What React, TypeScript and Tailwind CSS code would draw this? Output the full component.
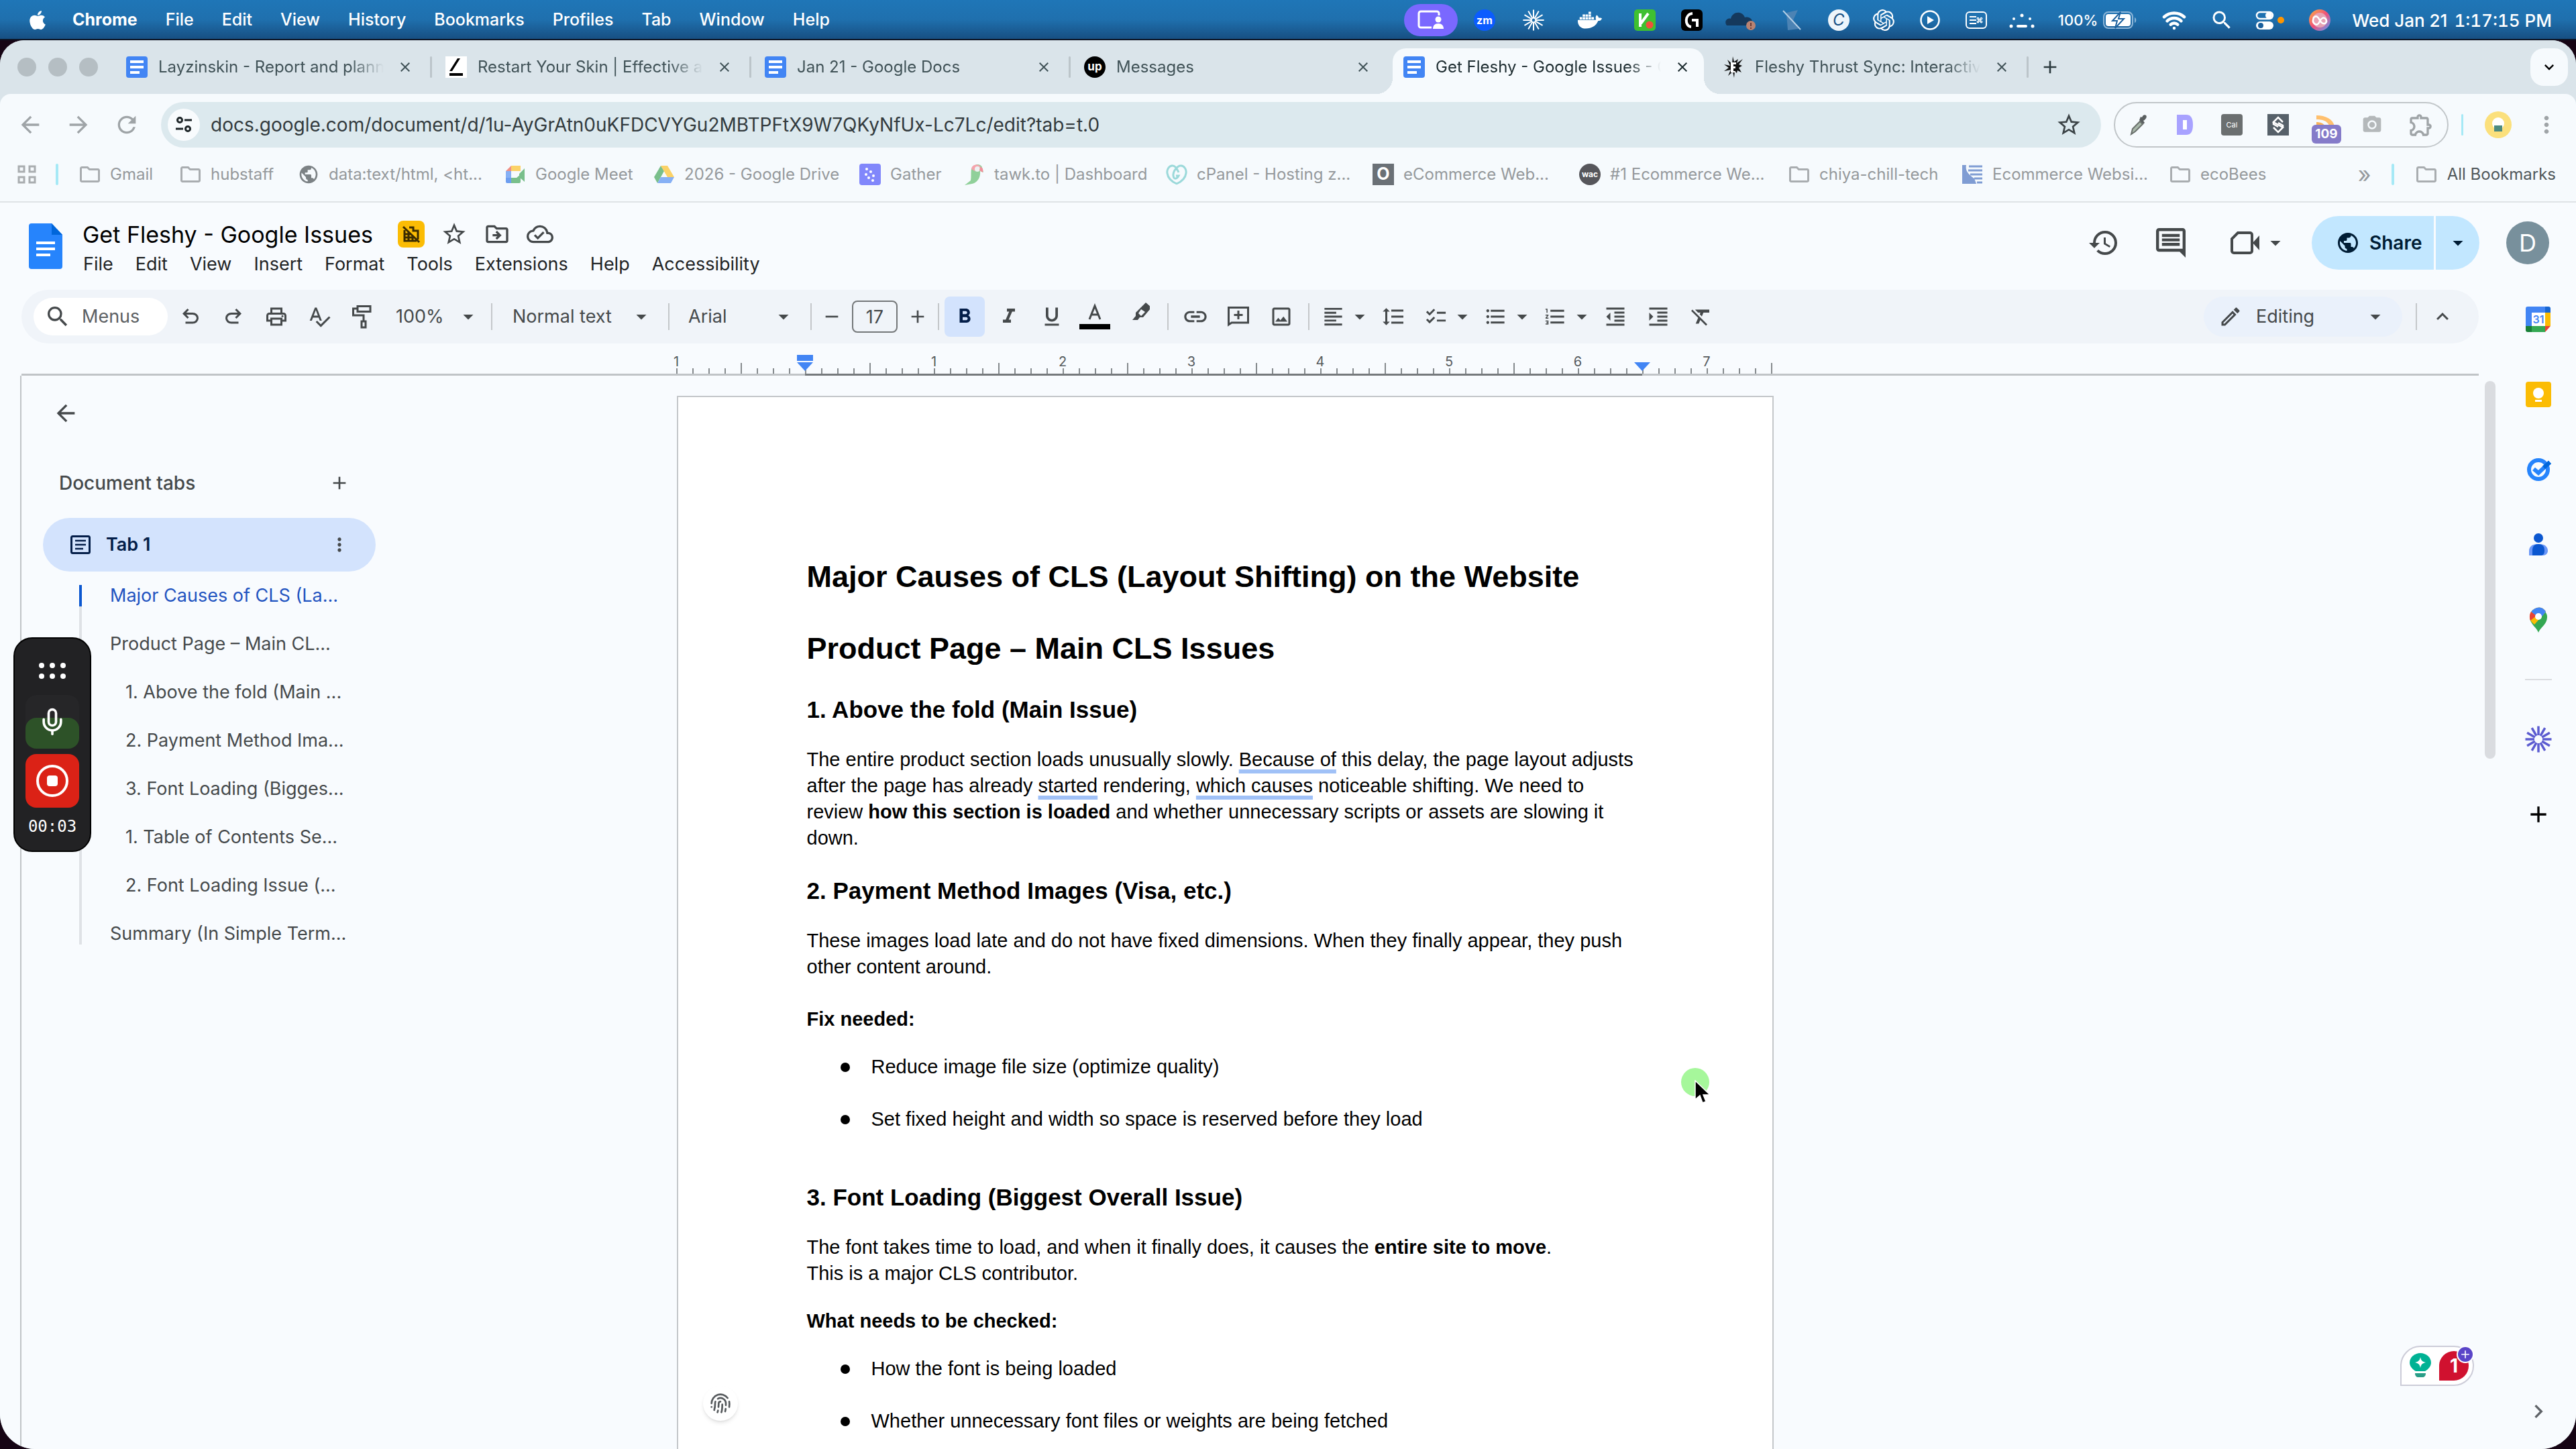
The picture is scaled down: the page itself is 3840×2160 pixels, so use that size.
import type { ReactNode } from "react";
import {
  MdAdd,
  MdArrowBack,
  MdArrowDropDown,
  MdArrowForward,
  MdChecklist,
  MdClose,
  MdFormatAlignLeft,
  MdFormatBold,
  MdFormatClear,
  MdFormatIndentDecrease,
  MdFormatIndentIncrease,
  MdFormatItalic,
  MdFormatLineSpacing,
  MdFormatListBulleted,
  MdFormatListNumbered,
  MdFormatUnderlined,
  MdHistory,
  MdKeyboardArrowDown,
  MdKeyboardArrowUp,
  MdKeyboardArrowRight,
  MdLink,
  MdMoreVert,
  MdOutlineCloudDone,
  MdOutlineDriveFileMove,
  MdOutlineEdit,
  MdOutlineExtension,
  MdOutlineFolder,
  MdOutlineImage,
  MdOutlinePrint,
  MdPhotoCamera,
  MdPublic,
  MdRefresh,
  MdRemove,
  MdSearch,
  MdSpellcheck,
  MdStarBorder,
} from "react-icons/md";
import { FaApple, FaDocker } from "react-icons/fa";
import { SiOpenai } from "react-icons/si";
import { Command, Fingerprint, Mic, Wifi } from "lucide-react";

const Burst = ({ className, rays, inner, width }: { className: string; rays: number; inner: number; width: number }) => (
  <svg viewBox="0 0 40 40" className={className} stroke="currentColor" strokeWidth={width}>
    {Array.from({ length: rays }, (_, i) => (
      <line key={i} x1="20" y1={20 - inner} x2="20" y2="0.5" transform={`rotate(${(360 / rays) * i} 20 20)`} />
    ))}
  </svg>
);

const DocsFavicon = () => (
  <svg viewBox="0 0 32 32" className="size-8 shrink-0">
    <rect width="32" height="32" rx="4" fill="#4285f4" />
    <path d="M6 6h20v4H6zM6 14h20v4H6zM6 22h14v4H6z" fill="#fff" />
  </svg>
);

const SlashFavicon = () => (
  <svg viewBox="0 0 32 32" className="size-8 shrink-0">
    <rect width="32" height="32" fill="#fff" />
    <path d="M18 3h4L10 22H6zM6 25h20v4H6z" fill="#000" />
  </svg>
);

const UpFavicon = () => (
  <span className="flex size-8 shrink-0 items-center justify-center rounded-full bg-black text-[17px] font-bold text-white">
    up
  </span>
);

const InkFavicon = () => (
  <svg viewBox="0 0 32 32" className="size-8 shrink-0" fill="#111">
    <path d="M15 0l2 8 6-4-2 6 9-6-6 8 5 2-5 3 4 7-6-3-1 4-3-3-1 10-2-9-7 6 4-9-10 2 7-5-7-5 9 2-4-9 7 6z" />
    <path d="M12 9h8v3h-4v3h3v3h-3v4h3v2h-7z" fill="#fff" />
  </svg>
);

const browserTabs = [
  { title: "Layzinskin - Report and planning", icon: <DocsFavicon /> },
  { title: "Restart Your Skin | Effective and", icon: <SlashFavicon /> },
  { title: "Jan 21 - Google Docs", icon: <DocsFavicon /> },
  { title: "Messages", icon: <UpFavicon /> },
  { title: "Get Fleshy - Google Issues - Google", icon: <DocsFavicon />, active: true },
  { title: "Fleshy Thrust Sync: Interactive", icon: <InkFavicon /> },
];

const MenuBar = () => (
  <header className="flex h-15 shrink-0 items-center justify-between border-b-2 border-[#0c1424] bg-linear-to-b from-[#1f76b7] via-[#1f70ae] to-[#174f82] pt-[2px] pr-9 pl-10 text-[26px] text-white">
    <nav className="flex items-center gap-[42px] text-[25px] font-medium">
      <FaApple className="-mr-[6px] size-8" />
      <button className="font-bold">Chrome</button>
      {["File", "Edit", "View", "History", "Bookmarks", "Profiles", "Tab", "Window", "Help"].map((item) => (
        <button key={item}>{item}</button>
      ))}
    </nav>
    <div className="flex items-center">
      <span className="mr-6 flex h-12 w-20 items-center justify-center rounded-full bg-[#7a68ff]">
        <svg viewBox="0 0 40 30" className="h-[30px] w-10" fill="none" stroke="#fff" strokeWidth="3">
          <path d="M32 8V5a3 3 0 0 0-3-3H5a3 3 0 0 0-3 3v18a3 3 0 0 0 3 3h16" />
          <circle cx="31" cy="14" r="4.500" fill="#fff" stroke="none" />
          <path d="M23 28c0-5 3-8 8-8s8 3 8 8z" fill="#fff" stroke="none" />
        </svg>
      </span>
      <span className="mr-[41px] flex size-8 items-center justify-center rounded-full bg-[#0b5cff] text-[16px] font-bold">zm</span>
      <Burst className="mr-[50px] size-8" rays={12} inner={3} width={2.5} />
      <FaDocker className="mr-[48px] size-9" />
      <svg viewBox="0 0 32 32" className="mr-[38px] size-8">
        <rect width="32" height="32" rx="5" fill="#3fc030" />
        <path d="M9 6v20M21 6L10 21" stroke="#fff" strokeWidth="4" fill="none" />
        <circle cx="23" cy="23" r="5.500" fill="#f0503c" />
      </svg>
      <svg viewBox="0 0 32 32" className="mr-[32px] size-8" fill="none" stroke="#fff" strokeWidth="4">
        <rect width="32" height="32" rx="6" fill="#000" stroke="none" />
        <path d="M17 6C5 7 5 25 15 26M16 16h8v10" />
      </svg>
      <svg viewBox="0 0 48 32" className="mr-[37px] h-8 w-12">
        <path d="M4 24c-5-7 2-12 6-10C12 3 27 1 31 12c8-2 13 4 11 12z" fill="#15395c" />
        <circle cx="40" cy="24" r="7" fill="#b98372" />
        <path d="M40 20v5M40 27v2" stroke="#6d3c35" strokeWidth="2" />
      </svg>
      <svg viewBox="0 0 32 32" className="mr-[38px] size-8">
        <path d="M8 5l17-4-7 15 8 13-16 2z" fill="#4c83b4" />
        <path d="M3 2l26 28" stroke="#b4cfe6" strokeWidth="2" />
      </svg>
      <span className="mr-[35px] flex size-8 items-center justify-center rounded-full bg-[#eef5fb] text-[24px] italic text-[#174f82]">C</span>
      <SiOpenai className="mr-[37px] size-8" />
      <svg viewBox="0 0 32 32" className="mr-[37px] size-8" fill="none" stroke="#fff" strokeWidth="2.500">
        <circle cx="16" cy="16" r="13.500" />
        <path d="M12 10l10 6-10 6z" fill="#fff" stroke="none" />
      </svg>
      <span className="mr-8 flex h-[26px] w-8 items-center justify-between rounded-md border-2 border-white px-1">
        <svg viewBox="0 0 10 14" className="h-[14px] w-[10px]" stroke="#fff" strokeWidth="2">
          <path d="M0 2h10M0 7h10M0 12h10" />
        </svg>
        <Command className="size-[10px]" strokeWidth={3} />
      </span>
      <svg viewBox="0 0 40 32" className="mr-[34px] h-8 w-10" fill="#fff">
        <circle cx="20" cy="9" r="2.500" />
        <circle cx="8" cy="14" r="2" />
        <circle cx="32" cy="14" r="2" />
        <circle cx="4" cy="25" r="2.500" />
        <circle cx="36" cy="25" r="2.500" />
        <rect x="12" y="23" width="16" height="4" rx="2" />
      </svg>
      <span className="mr-2 text-[22px] font-medium">100%</span>
      <svg viewBox="0 0 50 26" className="mr-[38px] h-[26px] w-[50px]">
        <rect x="1" y="1" width="43" height="24" rx="7" fill="none" stroke="#8db6d8" strokeWidth="2" />
        <rect x="4" y="4" width="37" height="18" rx="4" fill="#fff" />
        <path d="M47 9c3 1 3 7 0 8z" fill="#8db6d8" />
        <path d="M26 1L14 14h7l-3 11 13-14h-8z" fill="#fff" stroke="#1d629f" strokeWidth="2" />
      </svg>
      <Wifi className="mr-[35px] size-9" strokeWidth={3} />
      <MdSearch className="mr-8 size-9" />
      <svg viewBox="0 0 44 32" className="mr-9 h-8 w-11">
        <rect x="2" y="4" width="24" height="10" rx="5" fill="none" stroke="#fff" strokeWidth="2.500" />
        <circle cx="20" cy="9" r="5" fill="#fff" />
        <rect x="1" y="18" width="26" height="12" rx="6" fill="#fff" />
        <circle cx="8" cy="24" r="4" fill="#1a5f9c" />
        <circle cx="38" cy="16" r="5" fill="#ff9500" />
      </svg>
      <svg viewBox="0 0 32 32" className="mr-8 size-8" fill="none">
        <defs>
          <linearGradient id="siri" x1="0" y1="0" x2="1" y2="1">
            <stop offset="0" stopColor="#ffb340" />
            <stop offset="0.500" stopColor="#f0507a" />
            <stop offset="1" stopColor="#5aa0ff" />
          </linearGradient>
        </defs>
        <circle cx="16" cy="16" r="16" fill="url(#siri)" />
        <circle cx="16" cy="16" r="11" fill="#e8a3b4" />
        <path d="M7 12c4-4 7 0 9 4s6 7 9 4-1-9-5-7-4 7-7 9-8-2-7-6z" stroke="#fff" strokeWidth="2.500" />
      </svg>
      <span className="flex gap-[10px] font-medium">
        <span>Wed Jan 21</span>
        <span className="tabular-nums">1:17:15 PM</span>
      </span>
    </div>
  </header>
);

const TabStrip = () => (
  <div className="flex h-20 shrink-0 items-center bg-[#dae4ea] pr-3 pl-[26px]">
    <div className="mr-[26px] flex gap-[18px]">
      <span className="size-7 rounded-full bg-[#b5bec3]" />
      <span className="size-7 rounded-full bg-[#b5bec3]" />
      <span className="size-7 rounded-full bg-[#b5bec3]" />
    </div>
    <div className="flex h-full flex-1 pt-3">
      {browserTabs.map((tab, i) => (
        <div key={tab.title} className="flex">
          <div
            className={
              tab.active
                ? "relative flex w-[464px] items-center rounded-t-[20px] bg-[#f6fafd] px-4 pb-3 text-[#1c2b2f]"
                : "relative flex w-[464px] items-center px-4 pb-3 text-[#405257]"
            }
          >
            {tab.active && (
              <>
                <span className="absolute bottom-0 -left-6 size-6 bg-[radial-gradient(circle_at_0_0,transparent_24px,#f6fafd_24px)]" />
                <span className="absolute -right-6 bottom-0 size-6 bg-[radial-gradient(circle_at_100%_0,transparent_24px,#f6fafd_24px)]" />
              </>
            )}
            {tab.icon}
            <span className="ml-4 flex-1 overflow-hidden mask-r-from-85% text-[24px] whitespace-nowrap">{tab.title}</span>
            <button aria-label="Close tab" className="ml-4 flex size-8 items-center justify-center">
              <MdClose className="size-6" />
            </button>
          </div>
          <div className="flex w-3 items-center justify-center pb-3">
            {i !== 3 && i !== 4 && <span className="h-8 w-[3px] rounded-full bg-[#bcc5ca]" />}
          </div>
        </div>
      ))}
      <button aria-label="New tab" className="ml-3 pb-3 text-[#2d3b40]">
        <MdAdd className="size-8" />
      </button>
    </div>
    <button aria-label="Search tabs" className="flex size-14 items-center justify-center rounded-[20px] bg-[#f6fafd] text-black">
      <MdKeyboardArrowDown className="size-7" />
    </button>
  </div>
);

const AddressBar = () => (
  <div className="flex h-[92px] shrink-0 items-center pr-6 pl-[25px]">
    <div className="flex w-[215px] items-center gap-8 text-[#9fa4a7]">
      <button aria-label="Back">
        <MdArrowBack className="size-10" />
      </button>
      <button aria-label="Forward">
        <MdArrowForward className="size-10" />
      </button>
      <button aria-label="Reload">
        <MdRefresh className="size-10" />
      </button>
    </div>
    <div className="flex h-17 flex-1 items-center rounded-full bg-[#dce9ee] pr-7 pl-[10px]">
      <span className="flex size-12 items-center justify-center rounded-full bg-[#f8fbfd]">
        <svg viewBox="0 0 28 28" className="size-7" fill="none" stroke="#1d2528" strokeWidth="3">
          <circle cx="8" cy="7" r="3.500" />
          <path d="M15 7h11M2 20h11" />
          <circle cx="20" cy="20" r="3.500" />
        </svg>
      </span>
      <input
        aria-label="Address"
        className="ml-4 flex-1 text-[28px] text-[#333b3e] outline-none"
        defaultValue="docs.google.com/document/d/1u-AyGrAtn0uKFDCVYGu2MBTPFtX9W7QKyNfUx-Lc7Lc/edit?tab=t.0"
      />
      <button aria-label="Bookmark this tab">
        <MdStarBorder className="size-10 text-[#3c4447]" />
      </button>
    </div>
    <div className="mx-[19px] flex h-17 w-[499px] items-center justify-around rounded-full border-2 border-[#c1c6c9]">
      <svg viewBox="0 0 32 32" className="size-8">
        <path d="M5 30l2-8L18 11l4 4L11 26z" fill="#a9b8aa" stroke="#6a706c" strokeWidth="2" />
        <path d="M17 9l6 6 2-2-2-3c4-2 6-6 4-8s-5 0-6 3l-2-1z" fill="#5a5f60" />
      </svg>
      <svg viewBox="0 0 32 32" className="size-8">
        <path d="M4 1h14c6 0 10 4 10 15s-4 15-10 15H4z" fill="#a8a2ff" />
        <rect x="13" y="9" width="6" height="14" fill="#fff" />
      </svg>
      <span className="flex size-8 items-center justify-center rounded-sm bg-[#6b6f70] text-[11px] text-white">Cal</span>
      <svg viewBox="0 0 32 32" className="size-8">
        <rect width="32" height="32" fill="#566069" />
        <path d="M23 12l-7-7-7 7 14 8-7 7-7-7M9 12v3l7 4M23 20v-3l-7-4" stroke="#fff" strokeWidth="2.500" fill="none" />
      </svg>
      <span className="relative size-8">
        <svg viewBox="0 0 32 32" className="size-8">
          <path d="M3 2c14 0 25 6 27 16L22 17C19 10 12 8 3 8z" fill="#ffc06e" />
          <path d="M3 12c6 0 11 2 13 6H3z" fill="#f7b25a" />
        </svg>
        <span className="absolute top-4 -left-1 flex h-7 w-11 items-center justify-center rounded-md bg-[#857bc9] text-[19px] font-bold text-white">
          109
        </span>
      </span>
      <MdPhotoCamera className="size-8 text-[#b4b8ba]" />
      <MdOutlineExtension className="size-10 text-[#9fa4a7]" />
    </div>
    <span className="h-8 w-[3px] rounded-full bg-[#a6e9f6]" />
    <span className="mx-8 flex size-10 items-center justify-center rounded-full bg-[#fbe07c]">
      <svg viewBox="0 0 24 24" className="size-6">
        <circle cx="12" cy="10" r="9" fill="#fff" />
        <rect x="6" y="13" width="12" height="9" fill="#4c8a80" />
      </svg>
    </span>
    <button aria-label="Chrome menu">
      <MdMoreVert className="size-10 text-[#9fa4a7]" />
    </button>
  </div>
);

const Folder = () => <MdOutlineFolder className="size-9 text-[#a9adb0]" />;

const bookmarks: { label: string; icon: ReactNode; size: string }[] = [
  { label: "Gmail", icon: <Folder />, size: "w-[150px]" },
  { label: "hubstaff", icon: <Folder />, size: "w-[176px]" },
  { label: "data:text/html, <ht...", icon: <MdPublic className="size-8 text-[#7c8285]" />, size: "w-[308px]" },
  {
    label: "Google Meet",
    icon: (
      <svg viewBox="0 0 32 28" className="h-7 w-8">
        <path d="M2 9l8-8v8z" fill="#ef8f85" />
        <path d="M10 1h14v8H10z" fill="#fbd267" />
        <path d="M2 9h8v10H2z" fill="#86b0f5" />
        <path d="M2 19h8v8H4a2 2 0 0 1-2-2z" fill="#6d9ef0" />
        <path d="M10 19h8l6-5v11a2 2 0 0 1-2 2H10zM22 13l8-8v20l-8-7z" fill="#79bf8b" />
      </svg>
    ),
    size: "w-[222px]",
  },
  {
    label: "2026 - Google Drive",
    icon: (
      <svg viewBox="0 0 32 28" className="h-7 w-8">
        <path d="M11 1L1 18l5 9L16 9z" fill="#79bf8b" />
        <path d="M11 1h10l10 17H21z" fill="#fbd267" />
        <path d="M11 18h20l-5 9H6z" fill="#86b0f5" />
      </svg>
    ),
    size: "w-[307px]",
  },
  {
    label: "Gather",
    icon: (
      <svg viewBox="0 0 32 32" className="size-8" fill="#fff">
        <rect width="32" height="32" rx="4" fill="#8187fb" />
        <circle cx="11" cy="8" r="2" />
        <circle cx="17" cy="12" r="2" />
        <circle cx="10" cy="16" r="2" />
        <circle cx="21" cy="18" r="2" />
        <circle cx="14" cy="21" r="2" />
        <circle cx="20" cy="25" r="2" />
      </svg>
    ),
    size: "w-[155px]",
  },
  {
    label: "tawk.to | Dashboard",
    icon: (
      <svg viewBox="0 0 32 32" className="size-8">
        <path d="M12 8c2-8 15-9 16-2l2 7-5-2c1 10-4 17-12 19l-11 2 9-7c1-6 0-11 1-17z" fill="#90d09a" />
        <path d="M12 8c1-8 12-8 14-3l-6 1-3 5z" fill="#f5a3ac" />
        <circle cx="21" cy="8" r="4" fill="#eef1f2" />
        <path d="M25 5c4 0 5 4 4 8l-5-3z" fill="#f18f9b" />
      </svg>
    ),
    size: "w-[302px]",
  },
  {
    label: "cPanel - Hosting z...",
    icon: (
      <svg viewBox="0 0 32 32" className="size-8" fill="none" stroke="#9bd9da" strokeWidth="3">
        <path d="M16 30C-2 22-1 5 9 3c5-1 8 5 10 10M16 30C34 22 33 5 23 3c-5-1-13 8-12 15s6 4 8 0h-4" />
      </svg>
    ),
    size: "w-[308px]",
  },
  {
    label: "eCommerce Web...",
    icon: <span className="flex size-8 items-center justify-center bg-[#6a7076] text-[25px] font-bold text-white">O</span>,
    size: "w-[308px]",
  },
  {
    label: "#1 Ecommerce We...",
    icon: <span className="flex size-8 items-center justify-center rounded-full bg-[#56565b] text-[12px] font-bold text-white">wac</span>,
    size: "w-[312px]",
  },
  { label: "chiya-chill-tech", icon: <Folder />, size: "w-[258px]" },
  {
    label: "Ecommerce Websi...",
    icon: (
      <svg viewBox="0 0 32 32" className="size-8">
        <path d="M1 2h6c-2 10 5 15 12 20l3 8H1z" fill="#7f9cd3" />
        <path d="M11 4h20M10 10h21M13 16h18M19 22h12M23 28h8" stroke="#7f9cd3" strokeWidth="3" />
      </svg>
    ),
    size: "w-[310px]",
  },
  { label: "ecoBees", icon: <Folder />, size: "w-[150px]" },
];

const BookmarksBar = () => (
  <nav className="flex h-[70px] shrink-0 items-center border-b-2 border-[#dfe3e6] pr-[30px] pb-3 pl-[26px] text-[24px] text-[#95999c]">
    <svg viewBox="0 0 28 28" className="size-7" fill="none" stroke="#a9adb0" strokeWidth="3">
      <path d="M2 2h8v8H2zM18 2h8v8h-8zM2 18h8v8H2zM18 18h8v8h-8z" />
    </svg>
    <span className="mx-[29px] h-8 w-1 rounded-full bg-[#a6e9f6]" />
    <div className="flex flex-1">
      {bookmarks.map((b) => (
        <a key={b.label} href="#" className={`flex shrink-0 items-center whitespace-nowrap ${b.size}`}>
          <span className="mr-3 flex w-9 shrink-0 items-center justify-center">{b.icon}</span>
          {b.label}
        </a>
      ))}
    </div>
    <button aria-label="More bookmarks" className="text-[34px] leading-8">
      »
    </button>
    <span className="mx-[30px] h-8 w-1 rounded-full bg-[#a6e9f6]" />
    <a href="#" className="flex items-center gap-[13px] text-[#50575a]">
      <Folder />
      All Bookmarks
    </a>
  </nav>
);

const DocsHeader = () => (
  <div className="flex h-[118px] shrink-0 items-start justify-between pr-10 pl-[43px]">
    <div className="flex">
      <svg viewBox="0 0 50 68" className="mt-[31px] h-17 w-[50px]">
        <path d="M4 0h30l16 17v47a4 4 0 0 1-4 4H4a4 4 0 0 1-4-4V4a4 4 0 0 1 4-4z" fill="#2684fc" />
        <path d="M34 0l16 17H34z" fill="#0066da" />
        <path d="M11 27h28v4H11zM11 36h28v4H11zM11 45h21v4H11z" fill="#fff" />
      </svg>
      <div className="ml-6 flex flex-col pt-6">
        <div className="flex h-[46px] items-center text-[#45494b]">
          <h1 className="mr-[37px] pl-[6px] text-[34px] text-black">Get Fleshy - Google Issues</h1>
          <span className="mr-6 flex size-10 items-center justify-center rounded-lg bg-[#fbbc04]">
            <svg viewBox="0 0 28 28" className="size-7" fill="none" stroke="#3b2c00" strokeWidth="3">
              <path d="M2 3l24 23M4 8v16h18M11 4h6v5h7v13M4 14h9M4 19h15M10 10v14M16 16v8" />
            </svg>
          </span>
          <button aria-label="Star" className="mr-6">
            <MdStarBorder className="size-10" />
          </button>
          <button aria-label="Move" className="mr-6">
            <MdOutlineDriveFileMove className="size-10" />
          </button>
          <button aria-label="Document status">
            <MdOutlineCloudDone className="size-10" />
          </button>
        </div>
        <nav className="flex h-11 items-center gap-[33px] pl-[7px] text-[27px] text-[#1f2325]">
          {["File", "Edit", "View", "Insert", "Format", "Tools", "Extensions", "Help", "Accessibility"].map((item) => (
            <button key={item}>{item}</button>
          ))}
        </nav>
      </div>
    </div>
    <div className="flex items-center pt-5 text-[#45494b]">
      <button aria-label="Version history" className="mr-[54px]">
        <MdHistory className="size-12" />
      </button>
      <button aria-label="Comments" className="mr-[66px]">
        <svg viewBox="0 0 40 40" className="size-11" fill="currentColor">
          <path d="M4 0a4 4 0 0 0-4 4v24a4 4 0 0 0 4 4h28l8 8V4a4 4 0 0 0-4-4zm0 4h32v24H4zM8 8h24v4H8zM8 14h24v4H8zM8 20h24v4H8z" fillRule="evenodd" />
        </svg>
      </button>
      <button aria-label="Join a call" className="mr-9 flex items-center gap-[6px]">
        <svg viewBox="0 0 44 36" className="h-9 w-11" fill="none" stroke="currentColor" strokeWidth="4">
          <path d="M12 3h18a3 3 0 0 1 3 3v24a3 3 0 0 1-3 3H6a3 3 0 0 1-3-3V12z" />
          <path d="M34 18l10-11v22z" fill="currentColor" stroke="none" />
        </svg>
        <MdArrowDropDown className="size-9" />
      </button>
      <div className="flex h-20 gap-[3px] text-[#001d35]">
        <button className="flex w-[182px] items-center gap-[14px] rounded-l-full bg-[#c2e7ff] pl-9 text-[28px] font-semibold">
          <MdPublic className="size-9" />
          Share
        </button>
        <button aria-label="Share options" className="flex w-[65px] items-center justify-center rounded-r-full bg-[#c2e7ff]">
          <MdArrowDropDown className="size-9" />
        </button>
      </div>
      <span className="ml-10 flex size-16 items-center justify-center rounded-full bg-[#78909c] text-[36px] text-white">D</span>
    </div>
  </div>
);

const Divider = ({ className = "" }: { className?: string }) => (
  <span className={`h-10 w-[2px] shrink-0 bg-[#c4c7ca] ${className}`} />
);

const Tool = ({ label, children }: { label: string; children: ReactNode }) => (
  <button aria-label={label} className="flex h-15 w-16 shrink-0 items-center justify-center">
    {children}
  </button>
);

const ToolMenu = ({ label, children }: { label: string; children: ReactNode }) => (
  <button aria-label={label} className="flex h-15 w-[89px] shrink-0 items-center gap-1 pl-[14px]">
    {children}
    <MdArrowDropDown className="size-9 shrink-0" />
  </button>
);

const ToolSelect = ({ label, value, className }: { label: string; value: string; className: string }) => (
  <label className={`flex h-15 shrink-0 items-center justify-between ${className}`}>
    <select aria-label={label} className="min-w-0 flex-1 appearance-none outline-none">
      <option>{value}</option>
    </select>
    <MdArrowDropDown className="pointer-events-none size-9 shrink-0" />
  </label>
);

const DocsToolbar = () => (
  <div className="mr-[145px] ml-8 flex h-20 shrink-0 items-center rounded-full bg-[#f0f4f9] px-[18px] text-[27px] text-[#45494b]">
    <label className="mr-[2px] flex h-14 w-[200px] shrink-0 items-center rounded-full bg-white pl-4">
      <MdSearch className="size-10 shrink-0" />
      <input aria-label="Search the menus" className="ml-4 w-24 outline-none placeholder:text-[#5c6063]" placeholder="Menus" />
    </label>
    <Tool label="Undo">
      <svg viewBox="0 -960 960 960" className="size-9" fill="currentColor">
        <path d="M280-200v-80h284q63 0 109.500-40T720-420q0-60-46.500-100T564-560H312l104 104-56 56-200-200 200-200 56 56-104 104h252q97 0 166.500 63T800-420q0 94-69.500 157T564-200H280Z" />
      </svg>
    </Tool>
    <Tool label="Redo">
      <svg viewBox="0 -960 960 960" className="size-9 -scale-x-100" fill="currentColor">
        <path d="M280-200v-80h284q63 0 109.500-40T720-420q0-60-46.500-100T564-560H312l104 104-56 56-200-200 200-200 56 56-104 104h252q97 0 166.500 63T800-420q0 94-69.500 157T564-200H280Z" />
      </svg>
    </Tool>
    <Tool label="Print">
      <MdOutlinePrint className="size-9" />
    </Tool>
    <Tool label="Spelling">
      <MdSpellcheck className="size-9" />
    </Tool>
    <Tool label="Paint format">
      <svg viewBox="0 0 36 36" className="size-9" fill="none" stroke="currentColor" strokeWidth="3">
        <path d="M11 2.500h19v8H11zM11 6H4.500v10H20v9" />
        <path d="M17 25h6v9h-6z" />
      </svg>
    </Tool>
    <ToolSelect label="Zoom" value="100%" className="w-[160px] pr-4 pl-[18px]" />
    <Divider />
    <ToolSelect label="Styles" value="Normal text" className="w-[262px] pr-[22px] pl-[30px]" />
    <Divider />
    <ToolSelect label="Font" value="Arial" className="w-[210px] pr-[22px] pl-7" />
    <Divider />
    <button aria-label="Decrease font size" className="flex w-[60px] shrink-0 justify-center">
      <MdRemove className="size-8" />
    </button>
    <input
      aria-label="Font size"
      defaultValue="17"
      className="h-12 w-17 shrink-0 rounded-lg border-2 border-[#747779] text-center outline-none"
    />
    <button aria-label="Increase font size" className="flex w-[60px] shrink-0 justify-center">
      <MdAdd className="size-8" />
    </button>
    <Divider className="mr-2" />
    <button aria-label="Bold" className="mr-1 flex size-15 shrink-0 items-center justify-center rounded-lg bg-[#d3e3fd] text-[#041e49]">
      <MdFormatBold className="size-9" />
    </button>
    <Tool label="Italic">
      <MdFormatItalic className="size-9" />
    </Tool>
    <Tool label="Underline">
      <MdFormatUnderlined className="size-9" />
    </Tool>
    <Tool label="Text color">
      <svg viewBox="0 0 46 40" className="h-10 w-[46px]">
        <path d="M15 24l8-20 8 20M18 17h10" stroke="#45494b" strokeWidth="3" fill="none" />
        <rect y="31" width="46" height="8" fill="#000" />
      </svg>
    </Tool>
    <Tool label="Highlight color">
      <svg viewBox="-6 0 36 36" className="mb-3 size-9" fill="currentColor">
        <path d="M24 3l7 6c1 1 1 2 0 3L20 25h-5l-3 4H4l5-6v-5zM17 13l-4 6 4 4 6-6z" fillRule="evenodd" />
      </svg>
    </Tool>
    <Divider className="mr-2 ml-3" />
    <Tool label="Insert link">
      <MdLink className="size-10" />
    </Tool>
    <Tool label="Add comment">
      <svg viewBox="0 0 36 36" className="size-9" fill="none" stroke="currentColor" strokeWidth="3">
        <path d="M3.500 30V4.500h29V27H8zM18 9v13M11.500 15.500h13" />
      </svg>
    </Tool>
    <Tool label="Insert image">
      <MdOutlineImage className="size-9" />
    </Tool>
    <Divider className="mr-1 ml-2" />
    <ToolMenu label="Align">
      <MdFormatAlignLeft className="size-9" />
    </ToolMenu>
    <Tool label="Line spacing">
      <MdFormatLineSpacing className="size-9" />
    </Tool>
    <ToolMenu label="Checklist">
      <MdChecklist className="size-10" />
    </ToolMenu>
    <ToolMenu label="Bulleted list">
      <MdFormatListBulleted className="size-10" />
    </ToolMenu>
    <ToolMenu label="Numbered list">
      <MdFormatListNumbered className="size-10" />
    </ToolMenu>
    <Tool label="Decrease indent">
      <MdFormatIndentDecrease className="size-9" />
    </Tool>
    <Tool label="Increase indent">
      <MdFormatIndentIncrease className="size-9" />
    </Tool>
    <Tool label="Clear formatting">
      <MdFormatClear className="size-9" />
    </Tool>
    <button className="mr-5 ml-auto flex h-15 w-[296px] items-center rounded-full bg-[#eaf1fb] px-[22px]">
      <MdOutlineEdit className="mr-5 size-9" />
      Editing
      <MdArrowDropDown className="ml-auto size-9" />
    </button>
    <Divider className="mr-5" />
    <button aria-label="Hide the menus" className="mr-[18px]">
      <MdKeyboardArrowUp className="size-9" />
    </button>
  </div>
);

// One cell is an eighth of an inch; the text area runs from cell 8 to cell 60.
const Ruler = () => (
  <div className="mr-[145px] ml-8 flex h-12 shrink-0 justify-center border-b-[3px] border-[#c0c4c7] text-[20px] text-[#555a5d]">
    <div className="mr-[77px] flex w-[1634px]">
      {Array.from({ length: 69 }, (_, i) => (
        <div
          key={i}
          className={
            i >= 8 && i < 60
              ? "relative -mb-[3px] flex h-12 w-6 shrink-0 items-end border-b-[3px] border-[#75797c]"
              : i === 68
                ? "relative flex w-[2px] shrink-0 items-end"
                : "relative flex w-6 shrink-0 items-end"
          }
        >
          <span className={i % 8 === 4 ? "h-4 w-[2px] bg-[#858a8d]" : "h-2 w-[2px] bg-[#858a8d]"} />
          {i % 8 === 0 && i !== 8 && (
            <span className="absolute bottom-[6px] left-0 w-6 -translate-x-1/2 text-center leading-6">{Math.abs(i / 8 - 1)}</span>
          )}
          {(i === 8 || i === 60) && (
            <svg viewBox="0 0 24 24" className="absolute bottom-1 left-0 size-6 -translate-x-1/2" fill="#4285f4">
              {i === 8 && <rect width="24" height="9" />}
              <path d="M0 11h24L12 24z" />
            </svg>
          )}
        </div>
      ))}
    </div>
  </div>
);

const outline = [
  { label: "Major Causes of CLS (La...", level: 1, active: true },
  { label: "Product Page – Main CL...", level: 1 },
  { label: "1. Above the fold (Main ...", level: 2 },
  { label: "2. Payment Method Ima...", level: 2 },
  { label: "3. Font Loading (Bigges...", level: 2 },
  { label: "1. Table of Contents Se...", level: 2 },
  { label: "2. Font Loading Issue (...", level: 2 },
  { label: "Summary (In Simple Term...", level: 1 },
];

const OutlinePanel = () => (
  <aside className="flex w-[528px] flex-col pt-9 pl-8 text-[27px] text-[#45494b]">
    <button aria-label="Close outline" className="ml-[14px] self-start">
      <MdArrowBack className="size-10" />
    </button>
    <div className="mt-16 flex h-10 items-center justify-between pr-[38px] pl-6">
      <h2 className="text-[28px] font-medium">Document tabs</h2>
      <button aria-label="Add tab">
        <MdAdd className="size-8" />
      </button>
    </div>
    <div className="mt-8 flex h-20 items-center rounded-full bg-[#d3e3fd] pr-[38px] pl-10 font-semibold text-[#041e49]">
      <svg viewBox="0 0 32 32" className="mr-[22px] size-8" fill="none" stroke="currentColor" strokeWidth="3">
        <rect x="2.500" y="3.500" width="27" height="25" rx="2" />
        <path d="M8 10h16M8 16h16M8 22h12" strokeWidth="2.500" />
      </svg>
      <button className="flex-1 text-left">Tab 1</button>
      <button aria-label="Tab options">
        <MdMoreVert className="size-8 text-[#45494b]" />
      </button>
    </div>
    <ul className="relative">
      <li className="absolute top-5 left-[54px] h-[536px] w-1 bg-[#dfe2e6]">
        <span className="block h-8 bg-[#0b57d0]" />
      </li>
      {outline.map((item) => (
        <li key={item.label} className="flex h-18 items-center whitespace-nowrap">
          <a
            href="#"
            className={
              item.active ? "pl-[100px] text-[#1f53c0]" : item.level === 2 ? "pl-[123px]" : "pl-[100px]"
            }
          >
            {item.label}
          </a>
        </li>
      ))}
    </ul>
  </aside>
);

const Suggestion = ({ children }: { children: ReactNode }) => (
  <span className="underline decoration-[#a0c1f7] decoration-[6px] underline-offset-[5px] [text-decoration-skip-ink:none]">
    {children}
  </span>
);

const Bullet = ({ children }: { children: ReactNode }) => (
  <li className="flex items-center">
    <span className="mr-8 ml-[50px] size-[14px] rounded-full bg-black" />
    {children}
  </li>
);

const DocumentPage = () => (
  <article className="mt-[30px] w-[1635px] shrink-0 border-2 border-b-0 border-[#c4c7ca] bg-white pr-[188px] pl-[192px] pt-[242px] font-['Liberation_Sans',Arial,sans-serif] text-[29px] leading-[39px] text-black">
    <h2 className="text-[45px] leading-[52px] font-bold whitespace-nowrap">Major Causes of CLS (Layout Shifting) on the Website</h2>
    <h2 className="mt-[55px] text-[45px] leading-[52px] font-bold">Product Page – Main CLS Issues</h2>
    <h3 className="mt-[45px] text-[35px] leading-10 font-bold">1. Above the fold (Main Issue)</h3>
    <p className="mt-[35px] whitespace-nowrap">
      The entire product section loads unusually slowly. <Suggestion>Because of</Suggestion> this delay, the page layout adjusts
      <br />
      after the page has already <Suggestion>started</Suggestion> rendering, <Suggestion>which causes</Suggestion> noticeable
      shifting. We need to
      <br />
      review <b>how this section is loaded</b> and whether unnecessary scripts or assets are slowing it
      <br />
      down.
    </p>
    <h3 className="mt-[39px] text-[35px] leading-10 font-bold">2. Payment Method Images (Visa, etc.)</h3>
    <p className="mt-[35px] whitespace-nowrap">
      These images load late and do not have fixed dimensions. When they finally appear, they push
      <br />
      other content around.
    </p>
    <p className="mt-[39px] font-bold">Fix needed:</p>
    <ul className="mt-8 flex flex-col gap-[39px]">
      <Bullet>Reduce image file size (optimize quality)</Bullet>
      <Bullet>Set fixed height and width so space is reserved before they load</Bullet>
    </ul>
    <h3 className="mt-[77px] text-[35px] leading-10 font-bold">3. Font Loading (Biggest Overall Issue)</h3>
    <p className="mt-[35px] whitespace-nowrap">
      The font takes time to load, and when it finally does, it causes the <b>entire site to move</b>.
      <br />
      This is a major CLS contributor.
    </p>
    <p className="mt-8 font-bold">What needs to be checked:</p>
    <ul className="mt-8 flex flex-col gap-[39px]">
      <Bullet>How the font is being loaded</Bullet>
      <Bullet>Whether unnecessary font files or weights are being fetched</Bullet>
    </ul>
  </article>
);

const SidePanel = () => (
  <aside className="absolute top-[154px] right-0 bottom-0 flex w-28 flex-col items-center gap-[72px]">
    <svg viewBox="0 0 40 40" className="size-10">
      <path d="M4 1h26v9H10v20H1V4a3 3 0 0 1 3-3z" fill="#4285f4" />
      <path d="M30 1h5a3 3 0 0 1 3 3v6h-8z" fill="#1967d2" />
      <path d="M30 10h8v20h-8z" fill="#fbbc04" />
      <path d="M10 30h20v9H10z" fill="#34a853" />
      <path d="M1 30h9v9H4a3 3 0 0 1-3-3z" fill="#188038" />
      <path d="M30 30h8l-8 9z" fill="#ea4335" />
      <path d="M10 10h20v20H10z" fill="#fff" />
      <text x="20" y="26" fontSize="16" fontWeight="600" textAnchor="middle" fill="#4285f4">
        31
      </text>
    </svg>
    <svg viewBox="0 0 40 40" className="size-10">
      <rect x="1" y="1" width="38" height="38" rx="4" fill="#fbbc04" />
      <circle cx="20" cy="18" r="8" fill="#fff" />
      <path d="M15 28h10v3H15z" fill="#fff" />
    </svg>
    <svg viewBox="0 0 40 40" className="size-10" fill="none">
      <circle cx="20" cy="20" r="14" stroke="#2684fc" strokeWidth="6" />
      <path d="M13 19l7 6 17-16" stroke="#2684fc" strokeWidth="6" />
      <path d="M28 17l9-8" stroke="#0066da" strokeWidth="6" />
    </svg>
    <svg viewBox="0 0 40 40" className="size-10">
      <path d="M6 36v-7c0-6 5-10 12-10h4c7 0 12 4 12 10 0 4-3 7-7 7z" fill="#6a97f7" />
      <path d="M11 36v-8c0-6 4-9 9-9s9 3 9 9-2 8-6 8z" fill="#0b57d0" />
      <circle cx="20" cy="10" r="7" fill="#0b57d0" />
    </svg>
    <svg viewBox="0 0 40 40" className="size-10">
      <path d="M20 39c-2-7-13-13-13-23 0-4 2-7 4-9l18 0c3 3 4 5 4 9 0 11-11 16-13 23z" fill="#34a853" />
      <path d="M9 8C15 0 26-1 31 8L14 27C10 24 7 20 7 15z" fill="#fbbc04" />
      <path d="M9 8C15 0 26-1 31 8l-9 11z" fill="#4285f4" />
      <path d="M9 8l8 6-9 7c-2-5-1-10 1-13z" fill="#ea4335" />
      <circle cx="20" cy="15" r="5" fill="#fff" />
    </svg>
    <span className="-my-1 h-[2px] w-10 bg-[#dadce0]" />
    <Burst className="size-10 text-[#5b5bd0]" rays={12} inner={6} width={3.5} />
    <button aria-label="Get add-ons" className="text-black">
      <MdAdd className="size-10" />
    </button>
    <button aria-label="Hide side panel" className="mt-auto mb-9 text-[#5f6368]">
      <MdKeyboardArrowRight className="size-10" />
    </button>
  </aside>
);

const Recorder = () => (
  <div className="absolute top-[950px] left-5 flex h-[320px] w-[116px] flex-col items-center rounded-[28px] border-2 border-black bg-[#222224] pt-9 text-white">
    <svg viewBox="0 0 40 24" className="h-6 w-10 shrink-0" fill="#fff">
      {[4, 20, 36].map((x) => (
        <g key={x}>
          <circle cx={x} cy="4" r="4" />
          <circle cx={x} cy="20" r="4" />
        </g>
      ))}
    </svg>
    <button
      aria-label="Microphone"
      className="relative mt-6 flex size-20 shrink-0 items-center justify-center rounded-2xl bg-[#262628]"
    >
      <span className="absolute inset-x-0 bottom-0 h-[46px] rounded-2xl bg-[#2d5228]" />
      <Mic className="relative size-11" />
    </button>
    <button aria-label="Stop recording" className="mt-2 flex size-20 shrink-0 items-center justify-center rounded-2xl bg-[#db2216]">
      <span className="flex size-12 items-center justify-center rounded-full border-4 border-white">
        <span className="size-4 rounded-sm bg-white" />
      </span>
    </button>
    <span className="mt-[10px] font-['DejaVu_Sans_Mono',monospace] text-[24px]">00:03</span>
  </div>
);

const Grammar = () => (
  <div className="absolute right-[152px] bottom-[94px] flex h-15 w-[110px] items-center gap-3 rounded-[30px] rounded-bl-none border-2 border-[#ccccd8] bg-white pl-3">
    <svg viewBox="0 0 32 40" className="h-10 w-8">
      <path d="M9 28C-8 18 2 1 16 1s24 17 7 27z" fill="#00b294" />
      <path d="M16 7c1 5 3 7 8 8-5 1-7 3-8 8-1-5-3-7-8-8 5-1 7-3 8-8z" fill="#fff" />
      <path d="M8 31h16c0 4-2 6-5 6h-6c-3 0-5-2-5-6z" fill="#2a9d87" />
    </svg>
    <span className="relative flex size-11 items-center justify-center rounded-full rounded-bl-none bg-[#d0112f] text-[28px] font-bold text-white">
      1
      <span className="absolute -top-2 -right-2 flex size-[26px] items-center justify-center rounded-full border-2 border-white bg-[#5a45c8]">
        <MdAdd className="size-5" />
      </span>
    </span>
  </div>
);

export default function App() {
  return (
    <div className="relative flex h-screen flex-col overflow-hidden bg-[#160414] font-['Inter',sans-serif]">
      <MenuBar />
      <div className="flex min-h-0 flex-1 flex-col overflow-hidden rounded-t-[36px] rounded-b-[52px] bg-[#dae4ea]">
        <TabStrip />
        <div className="flex shrink-0 flex-col rounded-t-2xl bg-[#f6fafd]">
          <AddressBar />
          <BookmarksBar />
        </div>
        <main className="relative flex min-h-0 flex-1 flex-col bg-[#f8fbfe]">
          <DocsHeader />
          <div className="mt-3 flex shrink-0 flex-col">
            <DocsToolbar />
            <Ruler />
          </div>
          <div className="ml-[30px] flex min-h-0 flex-1 overflow-hidden border-l-2 border-[#c0c4c7]">
            <div className="flex-1">
              <OutlinePanel />
            </div>
            <DocumentPage />
            <div className="flex-1" />
            <div className="w-[220px] shrink-0 pt-2 pl-[84px]">
              <div className="h-[563px] w-4 rounded-full bg-[#dadce0]" />
            </div>
          </div>
          <SidePanel />
        </main>
      </div>
      <Recorder />
      <Grammar />
      <button
        aria-label="Fingerprint"
        className="absolute bottom-[42px] left-[1048px] flex size-[52px] items-center justify-center rounded-full bg-white text-[#55595c] shadow-md"
      >
        <Fingerprint className="size-8" />
      </button>
      <div className="absolute top-[1592px] left-[2506px] size-[42px] rounded-full bg-[#a6f79b]">
        <svg viewBox="0 0 24 36" className="absolute top-[18px] left-5 h-9 w-6">
          <path d="M1 1v28l7-6 4 11 5-2-4-10h10z" fill="#000" stroke="#fff" strokeWidth="1.500" />
        </svg>
      </div>
    </div>
  );
}
